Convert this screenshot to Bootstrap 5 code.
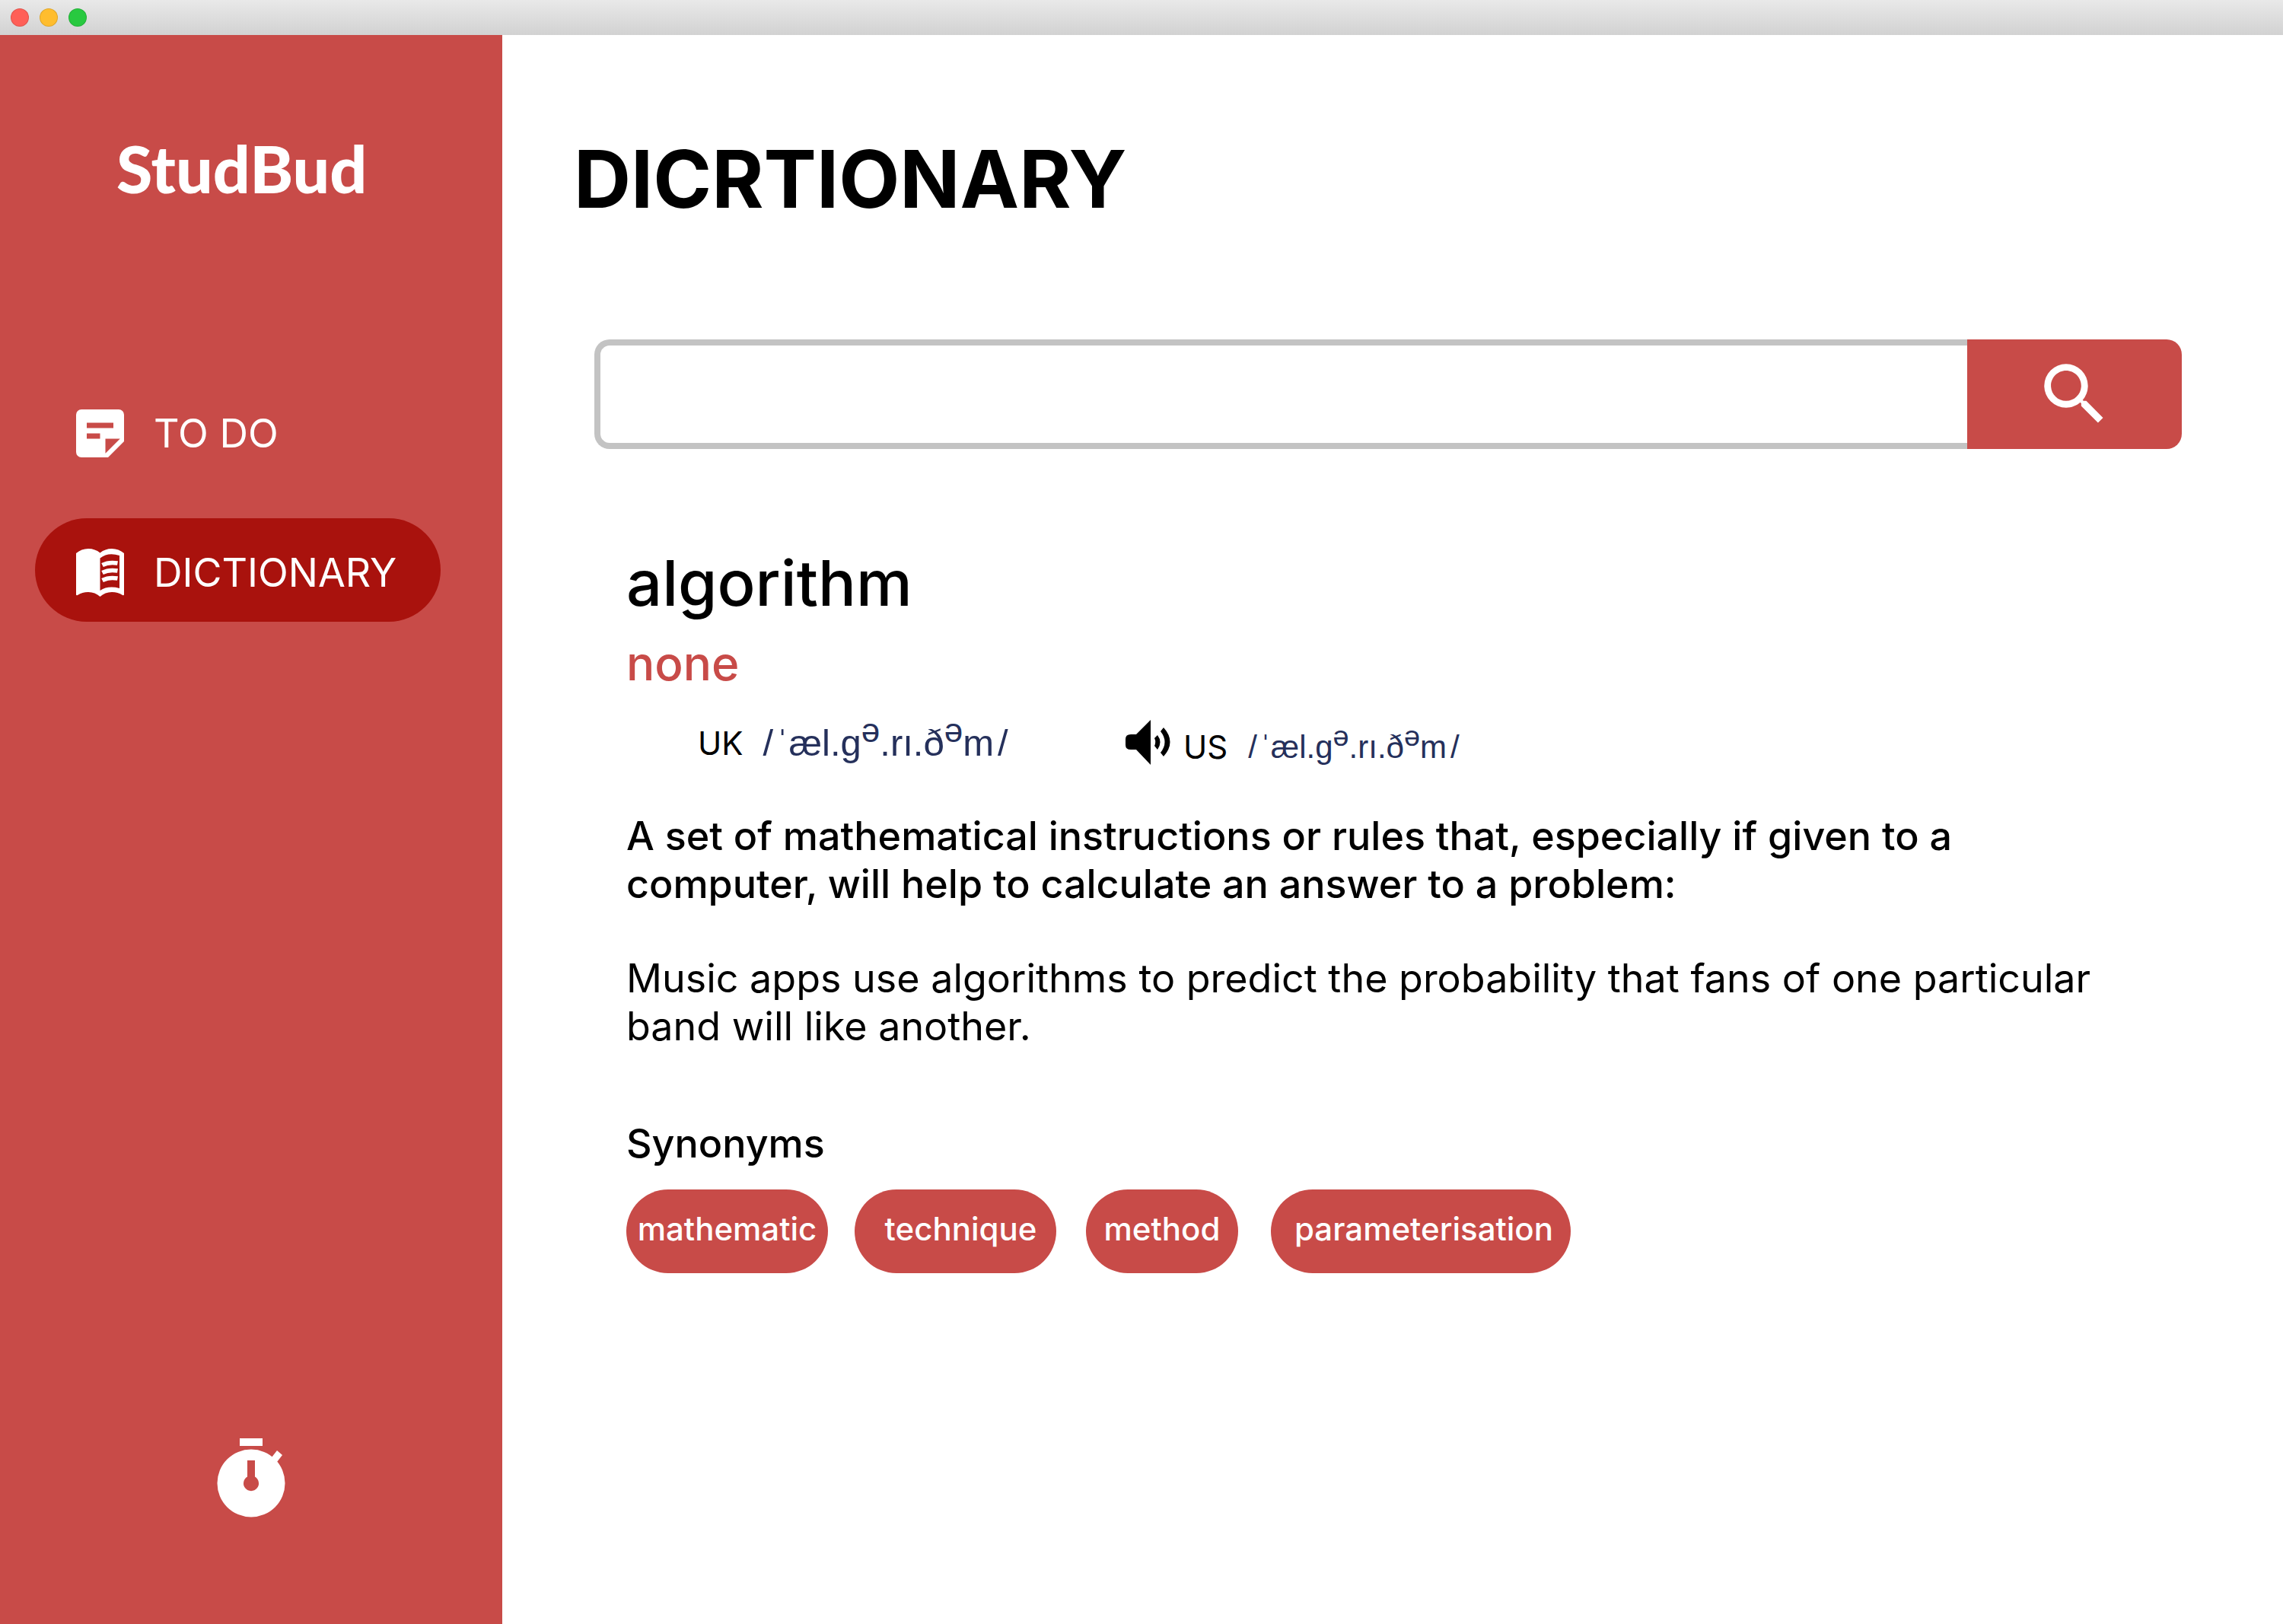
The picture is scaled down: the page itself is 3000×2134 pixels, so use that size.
<!DOCTYPE html>
<html lang="en">
<head>
<meta charset="utf-8">
<meta name="viewport" content="width=device-width, initial-scale=1">
<title>StudBud</title>
<link href="https://cdn.jsdelivr.net/npm/bootstrap@5.3.0/dist/css/bootstrap.min.css" rel="stylesheet">
<style>
  :root { --brand: #c84b48; --brand-dark: #a9120d; --ipa: #25305b; }
  body { font-family: Inter, "Liberation Sans", sans-serif; color: #000; background: #fff; }
  .titlebar { height: 46px; padding-left: 14px; gap: 14px; background: linear-gradient(#e9e9e9, #d2d2d2); }
  .light { width: 24px; height: 24px; border: 1px solid rgba(0, 0, 0, .12); }
  .light-close { background: #ff5f57; }
  .light-min { background: #ffbd2e; }
  .light-max { background: #28c940; }

  .sidebar { width: 660px; background: var(--brand); padding: 126px 46px 140px; }
  .brand-name { font: 900 86px/98px Lato, sans-serif; padding-left: 107px; }
  .side-nav { margin-top: 228px; gap: 47px; }
  .side-link { width: 533px; height: 136px; padding: 6px 54px 0; gap: 39px; font-size: 52px; line-height: 63px; color: #fff; }
  .side-link:hover { color: #fff; }
  .side-link.active { background: var(--brand-dark); }

  .content { padding: 126px 133px 60px 94px; }
  .page-title { font-size: 104px; line-height: 126px; }
  .search { margin: 148px 0 0 27px; height: 144px; }
  .search-box { border: 8px solid #c3c3c3; border-right: 0; border-radius: 20px 0 0 20px; font-size: 52px; padding: 0 32px; }
  .search-btn { width: 282px; background: var(--brand); border: 0; border-radius: 0 20px 20px 0; }
  .search-btn:hover { background: var(--brand-dark); }

  .entry { margin: 128px 0 0 69px; }
  .headword { font-size: 83px; line-height: 97px; }
  .word-class { font-size: 62px; line-height: 75px; margin-top: 19px; color: var(--brand); }
  .speech { margin-top: 37px; height: 60px; font-size: 42px; line-height: 51px; }
  .speech-uk { width: 656px; padding-left: 94px; gap: 26px; }
  .speech-text { padding-top: 10px; gap: 27px; }
  .ipa { font-family: "Liberation Sans", Arial, sans-serif; color: var(--ipa); }
  .ipa-lg { font-size: 49px; }
  .ipa sup { font-size: .9em; top: 0; vertical-align: .4em; line-height: 0; }
  .slash-open, .slash-close { margin: 0 4px 0 0; }
  .slash-close { margin: 0 0 0 5px; }
  .weight-medium { font-weight: 500; }
  .body-text { font-size: 52px; line-height: 63px; }
  .meaning, .example { margin-top: 61px; }
  .synonyms { margin-top: 91px; }
  .chips { margin-top: 29px; }
  .chip { height: 110px; padding-bottom: 7px; border-radius: 55px; background: var(--brand); color: #fff; font-size: 42px; }
  .chip:hover { color: #fff; background: var(--brand-dark); }
  .chip-md { width: 265px; }
  .chip-sm { width: 200px; margin-left: 39px; }
  .chip-lg { width: 394px; margin-left: 43px; padding-left: 8px; }
  .chip-shift { margin-left: 35px; padding-left: 14px; }
</style>
<script src="https://cdn.jsdelivr.net/npm/bootstrap@5.3.0/dist/js/bootstrap.bundle.min.js" defer></script>
</head>
<body class="d-flex flex-column min-vh-100">
  <header class="titlebar d-flex align-items-center flex-shrink-0">
    <span class="light light-close rounded-circle"></span>
    <span class="light light-min rounded-circle"></span>
    <span class="light light-max rounded-circle"></span>
  </header>

  <div class="d-flex flex-grow-1">
    <aside class="sidebar d-flex flex-column flex-shrink-0 text-white">
      <div class="brand-name">StudBud</div>
      <nav class="side-nav nav flex-column">
        <a class="side-link d-flex align-items-center rounded-pill text-decoration-none" href="#todo">
          <svg width="63" height="63" viewBox="0 0 18 18" fill="#fff" aria-hidden="true"><path fill-rule="evenodd" d="M2 0h14a2 2 0 0 1 2 2v10l-6 6H2a2 2 0 0 1-2-2V2a2 2 0 0 1 2-2zM4 5v2h10V5zM4 9v2h5V9zM11 11v5.500L16.500 11z"/></svg>
          <span>TO DO</span>
        </a>
        <a class="side-link active d-flex align-items-center rounded-pill text-decoration-none" href="#dictionary" aria-current="page">
          <svg width="63" height="63" viewBox="0 0 63 63" aria-hidden="true">
            <path fill="#fff" d="M0 6Q7 0 16 0Q25 0 31.500 5.500Q38 0 47 0Q56 0 63 6V60Q63 62 61 61Q55 57 47 57Q38 57 31.500 63Q25 57 16 57Q8 57 2 61Q0 62 0 60z"/>
            <path fill="#a9120d" d="M31.500 12.500Q42 4 57 9V52Q42 48 31.500 55z"/>
            <path fill="none" stroke="#fff" stroke-width="5.500" d="M34.500 21.500Q43 17 54.500 19M34.500 31.500Q43 27 54.500 29M34.500 41.500Q43 37 54.500 39"/>
          </svg>
          <span>DICTIONARY</span>
        </a>
      </nav>
      <a class="mt-auto align-self-center d-block lh-1" href="#timer" aria-label="Timer">
        <svg class="d-block" width="90" height="104" viewBox="0 0 90 104" fill="#fff" aria-hidden="true">
          <path d="M30 0h30v10H30z"/>
          <path d="M72 25 79 16 86 22 79 31z"/>
          <path fill-rule="evenodd" d="M45 14.500a44.500 44.500 0 1 0 0 89a44.500 44.500 0 1 0 0-89zM40 29h10v21.500a10 10 0 1 1-10 0z"/>
        </svg>
      </a>
    </aside>

    <main class="content flex-grow-1">
      <h1 class="page-title fw-bold mb-0">DICRTIONARY</h1>

      <form class="search input-group flex-nowrap w-auto" role="search">
        <input class="search-box form-control shadow-none" type="text" aria-label="Search a word">
        <button class="search-btn btn d-flex align-items-center justify-content-center p-0" type="submit" aria-label="Search">
          <svg width="106" height="106" viewBox="0 0 24 24" fill="#fff" aria-hidden="true"><path d="M15.500 14h-.790l-.280-.270A6.471 6.471 0 0 0 16 9.500 6.500 6.500 0 1 0 9.500 16c1.610 0 3.090-.590 4.230-1.570l.270.280v.790l5 4.990L20.490 19l-4.990-5zm-6 0C7.010 14 5 11.990 5 9.500S7.010 5 9.500 5 14 7.010 14 9.500 11.990 14 9.500 14z"/></svg>
        </button>
      </form>

      <article class="entry">
        <h2 class="headword weight-medium mb-0">algorithm</h2>
        <p class="word-class weight-medium mb-0">none</p>

        <div class="speech d-flex align-items-center">
          <div class="speech-uk d-flex align-items-center">
            <span>UK</span>
            <span class="ipa ipa-lg"><span class="slash-open">/</span>ˈæl.g<sup>ə</sup>.rı.ð<sup>ə</sup>m<span class="slash-close">/</span></span>
          </div>
          <div class="d-flex align-items-center">
            <button class="btn border-0 p-0 lh-1" type="button" aria-label="Play US pronunciation">
              <svg class="d-block me-3" width="60" height="60" viewBox="0 0 60 60" aria-hidden="true">
                <path d="M7 19H14L33 0V59L14 39H7Q0 39 0 33V25Q0 19 7 19z"/>
                <path d="M42 20Q49 29 42 39L38 34Q40.500 29 38 24zM50 10Q67 29 50 48L46 43Q57 29 46 15z"/>
              </svg>
            </button>
            <div class="speech-text d-flex align-items-center">
              <span>US</span>
              <span class="ipa"><span class="slash-open">/</span>ˈæl.g<sup>ə</sup>.rı.ð<sup>ə</sup>m<span class="slash-close">/</span></span>
            </div>
          </div>
        </div>

        <p class="body-text meaning weight-medium mb-0">A set of mathematical instructions or rules that, especially if given to a<br>computer, will help to calculate an answer to a problem:</p>
        <p class="body-text example mb-0">Music apps use algorithms to predict the probability that fans of one particular<br>band will like another.</p>

        <h3 class="body-text synonyms weight-medium mb-0">Synonyms</h3>
        <div class="chips d-flex weight-medium">
          <a class="chip chip-md d-flex align-items-center justify-content-center text-decoration-none" href="#mathematic">mathematic</a>
          <a class="chip chip-md chip-shift d-flex align-items-center justify-content-center text-decoration-none" href="#technique">technique</a>
          <a class="chip chip-sm d-flex align-items-center justify-content-center text-decoration-none" href="#method">method</a>
          <a class="chip chip-lg d-flex align-items-center justify-content-center text-decoration-none" href="#parameterisation">parameterisation</a>
        </div>
      </article>
    </main>
  </div>
</body>
</html>
